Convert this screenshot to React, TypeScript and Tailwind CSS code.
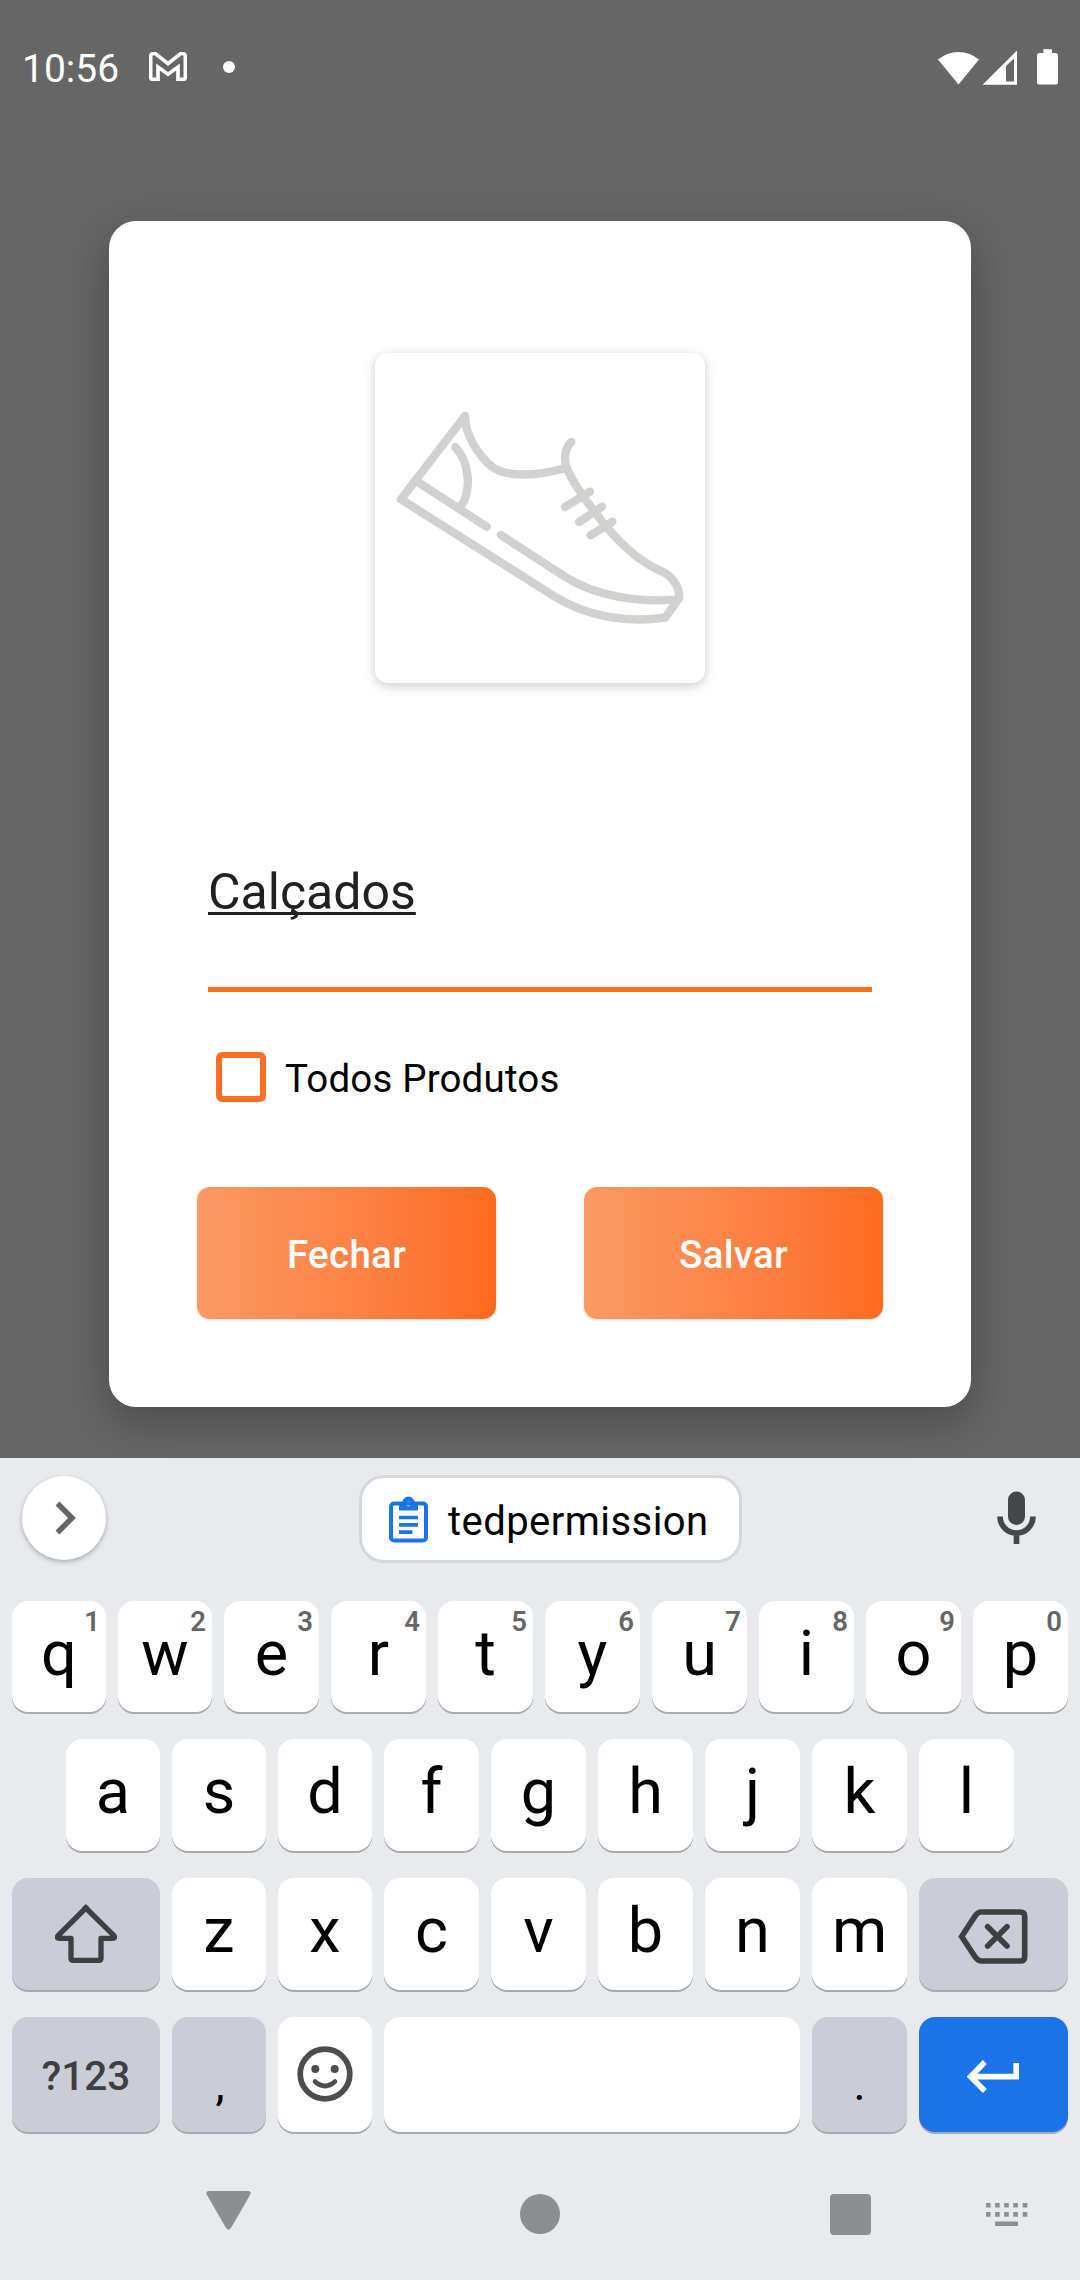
import type { ReactNode } from "react";

function StatusBar() {
  return (
    <header className="flex h-[136px] items-center justify-between pl-[22px] pr-[21px]">
      <div className="flex items-center">
        <span className="mt-[3px] text-[39px] leading-none text-white">10:56</span>
        <svg className="-mt-[3px] ml-[30px] h-[29px] w-[38px]" viewBox="448 96 114 87" fill="none" stroke="#fff" strokeWidth="11">
          <path d="M453 110V171q0 7 7 7H475V141L505 163L535 141V178H550q7 0 7-7V110C557 99 546 98 540 103L505 131L470 103C464 98 453 99 453 110Z" />
        </svg>
        <span className="-mt-[3px] ml-9 size-3 rounded-full bg-white" />
      </div>
      <svg className="-mt-[3px] h-9 w-[121px]" viewBox="0 0 121 36" fill="#fff">
        <path d="M0 10.6A31.6 31.6 0 0 1 41 10.6L20.500 35.500Z" />
        <path fillRule="evenodd" d="M44.500 35.700L79 1.500V35.700ZM68 17V32.500H76V9.500Z" />
        <path d="M105.300 0.300H114V4H117.500Q120 4 120 6.500V33Q120 35.600 117.500 35.600H101.600Q99 35.600 99 33V6.500Q99 4 101.600 4H105.300Z" />
      </svg>
    </header>
  );
}

function Shoe() {
  return (
    <svg className="size-[330px]" viewBox="45 39 990 990" fill="none" stroke="#d2d1cf" strokeWidth="25" strokeLinecap="round" strokeLinejoin="round">
      <path d="M617 384C535 407 440 415 393 378C355 345 315 285 315 228L123 478L580 767C680 830 800 849 916 833L957 774" />
      <path d="M634 306C613 326 611 360 620 384C640 428 665 467 705 516C780 620 845 668 905 694C942 712 959 744 957 774C957 778 950 778 945 779C830 789 704 766 615 710L422 585" />
      <path d="M380 560L170 424" />
      <path d="M286 321C327 366 337 445 303 500" />
      <path d="M615 501L690 455M657 546L726 500M692 586L757 545" />
    </svg>
  );
}

function GradientButton({ label }: { label: string }) {
  return (
    <button className="h-[132px] w-[299px] rounded-[13px] bg-linear-to-r from-[#fb9a64] to-[#fd6b1e] pt-1 text-[38.5px] font-medium tracking-[0.3px] text-white shadow-[0_1px_3px_rgba(0,0,0,0.15)]">
      {label}
    </button>
  );
}

function Dialog() {
  return (
    <main className="mx-auto mt-[85px] flex h-[1186px] w-[862px] flex-col rounded-[27px] bg-white pt-[132px] shadow-[0_14px_44px_rgba(0,0,0,0.28)]">
      <div className="mx-auto size-[330px] rounded-[13px] bg-white shadow-[0_3px_11px_rgba(0,0,0,0.22)]">
        <Shoe />
      </div>
      <div className="mx-[99px] mt-[179px] h-[130px] border-b-[5px] border-[#ff6f22]">
        <span className="block text-[50px] leading-[60px] text-[#212121] underline decoration-[3px] underline-offset-[3px] [text-decoration-skip-ink:none]">Calçados</span>
      </div>
      <label className="ml-[107px] mt-[60px] flex h-[50px] items-center">
        <span className="size-[50px] rounded-[6px] border-[6px] border-[#ff6f22]" />
        <span className="ml-[19px] mt-[3px] text-[38.5px] leading-[46px] tracking-[0.17px] text-black">Todos Produtos</span>
      </label>
      <div className="mx-[88px] mt-[85px] flex justify-between">
        <GradientButton label="Fechar" />
        <GradientButton label="Salvar" />
      </div>
    </main>
  );
}

function SuggestionStrip() {
  return (
    <div className="flex h-[143px] items-start pl-[22px] pr-[44px] pt-[17px]">
      <button className="mt-px flex size-[84px] items-center justify-center rounded-full bg-white shadow-[0_2px_5px_rgba(0,0,0,0.28)]">
        <svg className="ml-[2px] h-[34px] w-[21px]" viewBox="0 0 21 34" fill="none" stroke="#666" strokeWidth="5.500">
          <path d="M2.500 2.500L17 17L2.500 31.500" />
        </svg>
      </button>
      <button className="ml-[253px] flex h-[88px] w-[383px] items-center rounded-[25px] border-[3px] border-[#d6d7da] bg-white pl-[27px]">
        <svg className="h-[47px] w-[39px]" viewBox="147 166 117 138">
          <rect x="153" y="187" width="105" height="111" rx="9" fill="none" stroke="#1a73e8" strokeWidth="12" />
          <path fill="#1a73e8" fillRule="evenodd" d="M177 183H187C190 161 221 161 224 183H234V208H177ZM205.500 180a7.500 7.500 0 1 0 .1 0Z" />
          <path d="M177 229H234M177 251H234M177 273H217" stroke="#1a73e8" strokeWidth="11" />
        </svg>
        <span className="ml-5 mt-[5px] whitespace-nowrap text-[40px] leading-[48px] tracking-[0.45px] text-black [font-weight:450]">tedpermission</span>
      </button>
      <svg className="mt-[16px] ml-auto h-[54px] w-[39px]" viewBox="0 0 39 54" fill="none" stroke="#46474a">
        <rect x="11" y="0.500" width="17" height="33.500" rx="8.500" fill="#46474a" stroke="none" />
        <path d="M3 25.500A16.500 16.500 0 0 0 36 25.500M19.500 42V53" strokeWidth="5.700" />
      </svg>
    </div>
  );
}

const keyBase = "flex justify-center rounded-[16px] shadow-[0_2px_0_#a9aaad]";

function LetterKey({ label, hint, narrow }: { label: string; hint?: string; narrow?: boolean }) {
  return (
    <button className={`${keyBase} relative bg-white ${narrow ? "w-[94px]" : "w-[95px]"}`}>
      <span className="text-[63px] leading-[105px] text-black">{label}</span>
      {hint && <span className="absolute right-[6px] top-[4px] text-[27.5px] leading-[34px] font-semibold text-[#666]">{hint}</span>}
    </button>
  );
}

function ActionKey({ children, size, tone }: { children?: ReactNode; size: string; tone: string }) {
  return <button className={`${keyBase} items-center ${size} ${tone}`}>{children}</button>;
}

function Keyboard() {
  return (
    <section className="flex h-[822px] flex-col bg-[#e8eaee]">
      <SuggestionStrip />
      <div className="flex flex-col gap-[27px] px-3">
        <div className="flex h-[111px] gap-3">
          {"qwertyuiop".split("").map((letter, i) => (
            <LetterKey key={letter} label={letter} hint={String((i + 1) % 10)} narrow={i < 2} />
          ))}
        </div>
        <div className="flex h-[112px] gap-3 pl-[54px]">
          {"asdfghjkl".split("").map((letter, i) => (
            <LetterKey key={letter} label={letter} narrow={i < 3} />
          ))}
        </div>
        <div className="flex h-[112px] gap-3">
          <ActionKey size="w-[148px]" tone="bg-[#cbcdd6]">
            <svg className="-mt-[1px] h-[60px] w-[62px]" viewBox="164 130 186 180" fill="none" stroke="#3e3f41" strokeWidth="16" strokeLinejoin="round">
              <path strokeLinejoin="miter" d="M251 147L256.500 141.500L262 147" />
              <path d="M256.500 142L174 224Q166 233 178 233H212V293Q212 299 218 299H296Q302 299 302 293V233H336Q347 233 340 224Z" />
            </svg>
          </ActionKey>
          {"zxcvbnm".split("").map((letter, i) => (
            <LetterKey key={letter} label={letter} narrow={i < 2} />
          ))}
          <ActionKey size="w-[149px]" tone="bg-[#cbcdd6]">
            <svg className="ml-[-1px] mt-[5px] h-[55px] w-[70px]" viewBox="593 147 210 165" fill="none" stroke="#3e3f41" strokeWidth="17">
              <path d="M604 229.500L643 170Q652 156 662 156H780Q793 156 793 169V290Q793 303 780 303H662Q652 303 643 289Z" />
              <path d="M682 200L740 258M740 200L682 258" strokeLinecap="round" />
            </svg>
          </ActionKey>
        </div>
        <div className="flex h-[115px] gap-3">
          <ActionKey size="w-[148px]" tone="bg-[#cbcdd6]">
            <span className="mt-[3px] text-[40.5px] leading-none font-medium text-[#3e3f41]">?123</span>
          </ActionKey>
          <ActionKey size="w-[94px]" tone="bg-[#cbcdd6]">
            <span className="mt-[19px] ml-[2px] text-[46px] leading-[52px] text-black">,</span>
          </ActionKey>
          <ActionKey size="w-[94px]" tone="bg-white">
            <svg className="-mt-[2px] size-14" viewBox="0 0 56 56" fill="none" stroke="#4d4d4d">
              <circle cx="28" cy="28" r="24.800" strokeWidth="5.700" />
              <circle cx="18.300" cy="23" r="4" fill="#4d4d4d" stroke="none" />
              <circle cx="37.700" cy="23" r="4" fill="#4d4d4d" stroke="none" />
              <path d="M18 35.500Q28 44.500 38 35.500" strokeWidth="4.600" strokeLinecap="round" />
            </svg>
          </ActionKey>
          <button className="flex-1 rounded-[16px] bg-white shadow-[0_2px_0_#a9aaad]" aria-label="Espaço" />
          <ActionKey size="w-[95px]" tone="bg-[#cbcdd6]">
            <span className="mt-[19px] text-[46px] leading-[52px] text-black">.</span>
          </ActionKey>
          <ActionKey size="w-[149px]" tone="bg-[#1a73e8]">
            <svg className="ml-[-2px] mt-[4px] h-[33px] w-[52px]" viewBox="617 600 157 99" fill="none" stroke="#fff" strokeWidth="17">
              <path d="M671 606L628 650L671 693M628 650H765.500V609" />
            </svg>
          </ActionKey>
        </div>
      </div>
      <nav className="mt-[59px] grid h-[46px] grid-cols-[206px_305px_319px_156px_1fr] items-start">
        <span />
        <svg className="h-[39px] w-[45px]" viewBox="0 0 45 39" fill="#8d8e90">
          <path d="M3 0H42Q46 0 44 4L25 37Q22.500 40.500 20 37L1 4Q-1 0 3 0Z" />
        </svg>
        <span className="ml-[9px] mt-[3px] size-10 rounded-full bg-[#8d8e90]" />
        <span className="mt-[3px] size-[41px] rounded-[4px] bg-[#8d8e90]" />
        <svg className="mt-[12px] h-[23px] w-[42px]" viewBox="0 0 42 23" fill="#8d8e90">
          <path d="M0 0h4.600v4.600H0zM9.100 0h4.600v4.600H9.100zM18.200 0h4.600v4.600H18.200zM27.300 0h4.600v4.600H27.300zM36.700 0h4.600v4.600H36.700zM0 9.100h4.600v4.600H0zM9.100 9.100h4.600v4.600H9.100zM18.200 9.100h4.600v4.600H18.200zM27.300 9.100h4.600v4.600H27.300zM36.700 9.100h4.600v4.600H36.700zM9.100 18.500H32V23H9.100z" />
        </svg>
      </nav>
    </section>
  );
}

export default function App() {
  return (
    <div className="h-[2280px] w-[1080px] overflow-hidden bg-[#666] font-['Roboto',sans-serif]">
      <div className="h-[1458px] overflow-hidden">
        <StatusBar />
        <Dialog />
      </div>
      <Keyboard />
    </div>
  );
}
